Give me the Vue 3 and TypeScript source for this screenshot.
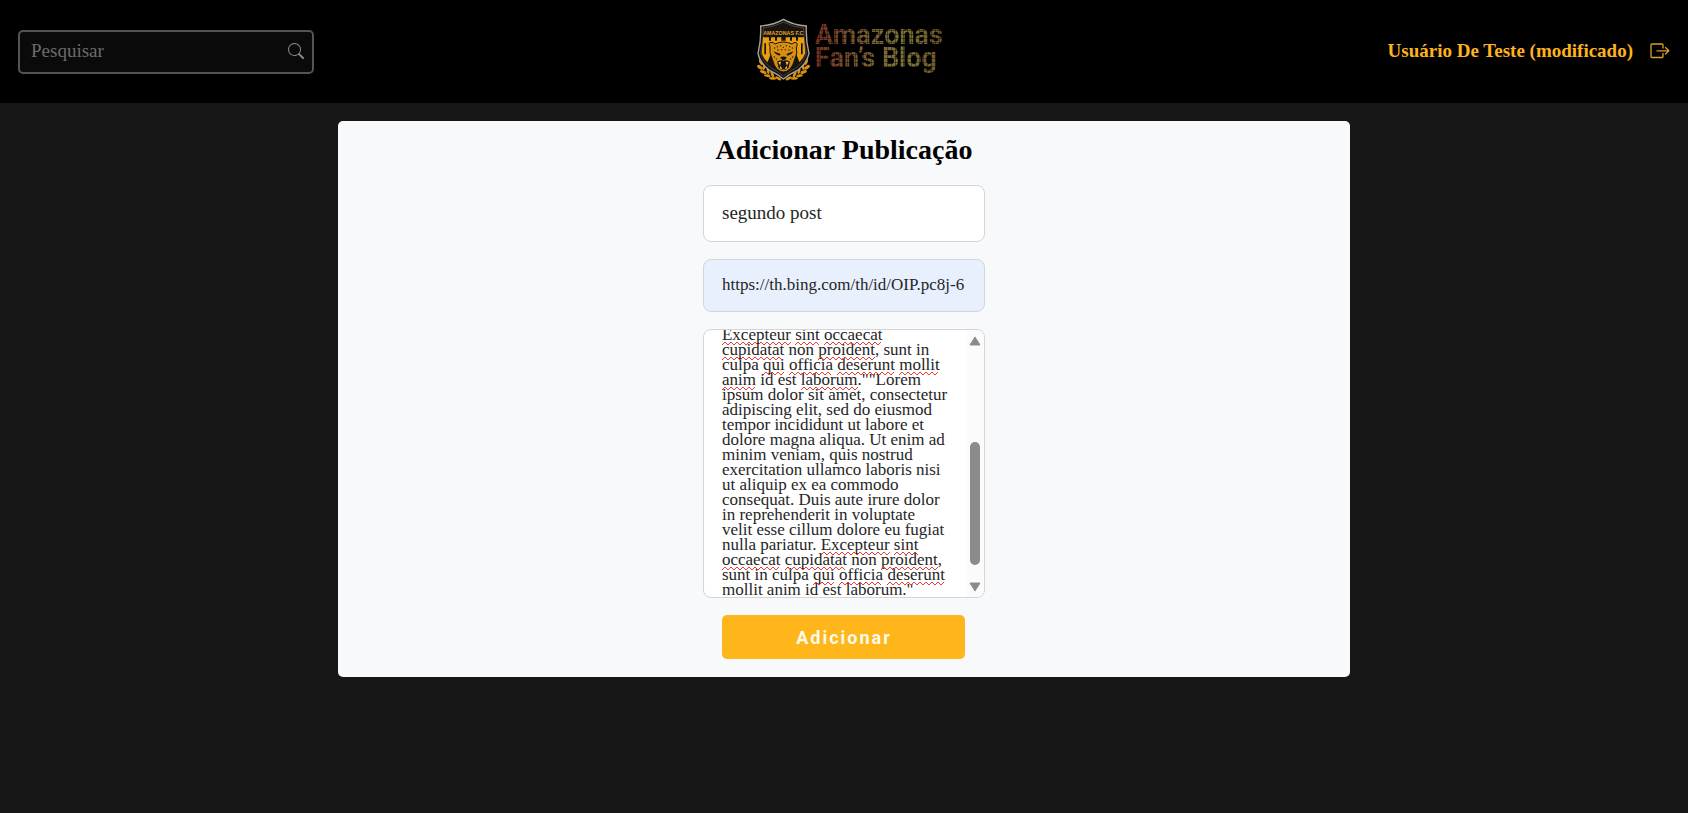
<script setup lang="ts">
import { computed, onMounted, ref } from 'vue'

interface Squiggle {
  x: number
  y: number
  width: number
}

const LINE_HEIGHT = 15
const BODY_FONT = '17px "Liberation Serif"'

const search = ref('')
const title = ref('segundo post')
const image = ref('https://th.bing.com/th/id/OIP.pc8j-6')
const body = ref(
  [
    'eu fugiat nulla pariatur.',
    'Excepteur sint occaecat',
    'cupidatat non proident, sunt in',
    'culpa qui officia deserunt mollit',
    'anim id est laborum.""Lorem',
    'ipsum dolor sit amet, consectetur',
    'adipiscing elit, sed do eiusmod',
    'tempor incididunt ut labore et',
    'dolore magna aliqua. Ut enim ad',
    'minim veniam, quis nostrud',
    'exercitation ullamco laboris nisi',
    'ut aliquip ex ea commodo',
    'consequat. Duis aute irure dolor',
    'in reprehenderit in voluptate',
    'velit esse cillum dolore eu fugiat',
    'nulla pariatur. Excepteur sint',
    'occaecat cupidatat non proident,',
    'sunt in culpa qui officia deserunt',
    'mollit anim id est laborum."',
  ].join('\n'),
)

const area = ref<HTMLTextAreaElement | null>(null)
const scrollTop = ref(0)

// [line, words flagged by the spell checker]
const flagged: [number, string[]][] = [
  [0, ['fugiat', 'nulla', 'pariatur']],
  [1, ['Excepteur', 'sint', 'occaecat']],
  [2, ['cupidatat', 'proident']],
  [3, ['qui', 'officia', 'deserunt', 'mollit']],
  [4, ['anim', 'laborum']],
  [15, ['Excepteur', 'sint']],
  [16, ['occaecat', 'cupidatat', 'proident']],
  [17, ['qui', 'officia', 'deserunt']],
  [18, ['mollit', 'anim', 'laborum']],
]

const context = document.createElement('canvas').getContext('2d')

function measure(text: string): number {
  if (!context) return 0
  context.font = BODY_FONT
  return context.measureText(text).width
}

const squiggles = computed<Squiggle[]>(() => {
  const lines = body.value.split('\n')
  const result: Squiggle[] = []
  for (const [index, words] of flagged) {
    const line = lines[index] ?? ''
    for (const word of words) {
      const start = line.indexOf(word)
      if (start < 0) continue
      result.push({
        x: Math.round(measure(line.slice(0, start))),
        y: index * LINE_HEIGHT + 14,
        width: Math.round(measure(word)),
      })
    }
  }
  return result
})

function wave(s: Squiggle): string {
  let d = `M${s.x} ${s.y + 4}`
  for (let i = 1; i * 3 <= s.width; i++) d += `L${s.x + i * 3} ${s.y + (i % 2 ? 1 : 4)}`
  return d
}

function syncScroll() {
  scrollTop.value = area.value?.scrollTop ?? 0
}

onMounted(() => {
  if (area.value) area.value.scrollTop = LINE_HEIGHT + 3
  syncScroll()
})
</script>

<template>
  <div class="page">
    <header class="header">
      <form class="search" role="search" @submit.prevent>
        <input v-model="search" type="search" placeholder="Pesquisar" aria-label="Pesquisar" />
        <button type="submit" aria-label="Buscar">
          <svg viewBox="0 0 16 16" width="16" height="16" fill="currentColor" aria-hidden="true">
            <path d="M11.742 10.344a6.5 6.5 0 1 0-1.397 1.398h-.001q.044.06.098.115l3.85 3.85a1 1 0 0 0 1.415-1.414l-3.85-3.85a1 1 0 0 0-.115-.1zM12 6.5a5.5 5.5 0 1 1-11 0 5.5 5.5 0 0 1 11 0" />
          </svg>
        </button>
      </form>

      <a class="logo" href="#">
        <svg class="crest" viewBox="20 15 171 201" width="57" height="67" aria-hidden="true">
          <g fill="#d6920f">
            <g id="laurel">
              <ellipse cx="38" cy="153" rx="5" ry="10" transform="rotate(-25 38 153)" />
              <ellipse cx="35" cy="169" rx="5" ry="10" transform="rotate(-55 35 169)" />
              <ellipse cx="47" cy="167" rx="4" ry="10" transform="rotate(5 47 167)" />
              <ellipse cx="45" cy="183" rx="5" ry="10" transform="rotate(-70 45 183)" />
              <ellipse cx="59" cy="179" rx="4" ry="10" transform="rotate(-10 59 179)" />
              <ellipse cx="57" cy="194" rx="4" ry="10" transform="rotate(-80 57 194)" />
              <ellipse cx="72" cy="190" rx="4" ry="10" transform="rotate(-25 72 190)" />
              <ellipse cx="73" cy="202" rx="4" ry="11" transform="rotate(-88 73 202)" />
              <ellipse cx="90" cy="202" rx="4" ry="10" transform="rotate(-60 90 202)" />
            </g>
            <use href="#laurel" transform="matrix(-1 0 0 1 211 0)" />
          </g>
          <path d="M105.500 25Q76 42 37 45Q39 84 29 128Q36 158 65 179Q87 189 105.500 204Q124 189 146 179Q175 158 182 128Q172 84 174 45Q135 42 105.500 25Z" fill="#17130f" stroke="#aaa79e" stroke-width="4" />
          <path d="M105.500 33Q77 48 45 51Q46 88 37 127Q44 154 70 172Q89 181 105.500 195Q122 181 141 172Q167 154 174 127Q165 88 166 51Q134 48 105.500 33Z" fill="none" stroke="#5d5a53" stroke-width="2" />
          <text x="105" y="71" text-anchor="middle" class="crest-name">AMAZONAS F.C</text>
          <g fill="#e99f0c">
            <path d="M44 79H62V89H68V79H80V89H86V79H99V89H112V79H125V89H131V79H143V89H149V79H167L171 127Q165 143 153 154L145 136V99H139V120H132V99H79V120H72V99H66V136L58 154Q46 143 40 127Z" />
          </g>
          <path d="M48 97H53V130H48ZM158 97H163V130H158ZM65 96H70V145H65ZM141 96H146V145H141Z" fill="#17130f" />
          <path d="M58 154L67 130H144L153 154Q142 168 105 190Q70 168 58 154Z" fill="#17130f" />
          <path d="M65 106Q59 94 68 94Q76 94 80 99Q105 87 131 99Q136 93 144 95Q150 97 144 110Q149 126 140 142Q134 165 125 174Q105 192 86 174Q77 165 71 142Q62 126 65 106Z" fill="#d88e10" stroke="#17130f" stroke-width="3" />
          <g fill="#17130f">
            <path d="M75 121L97 129L93 134Q82 132 75 121ZM136 121L114 129L118 134Q129 132 136 121Z" />
            <path d="M95 139Q105 134 116 139L109 147H102Z" />
            <path d="M86 152Q96 146 105 149Q114 146 125 152L120 171Q105 185 91 171Z" />
            <circle cx="79" cy="111" r="2" /><circle cx="87" cy="107" r="2" /><circle cx="97" cy="104" r="2" />
            <circle cx="114" cy="104" r="2" /><circle cx="124" cy="107" r="2" /><circle cx="132" cy="111" r="2" />
            <circle cx="89" cy="117" r="2" /><circle cx="100" cy="116" r="2" /><circle cx="111" cy="116" r="2" />
            <circle cx="122" cy="117" r="2" /><circle cx="78" cy="138" r="2" /><circle cx="133" cy="138" r="2" />
            <circle cx="84" cy="144" r="2" /><circle cx="127" cy="144" r="2" /><circle cx="105" cy="109" r="2" />
          </g>
          <path d="M90 153L95 164L98 152ZM112 152L116 164L121 153ZM94 172L97 164L101 174H110L114 164L117 172Q105 179 94 172Z" fill="#f3c157" />
        </svg>
        <span class="wordmark">Amazonas<br />Fan’s Blog</span>
      </a>

      <div class="account">
        <a class="user" href="#">Usuário De Teste (modificado)</a>
        <button class="logout" type="button" aria-label="Sair">
          <svg viewBox="0 0 20 16" width="20" height="16" fill="none" stroke="currentColor" aria-hidden="true">
            <path d="M13 5V2Q13 1 12 1H2Q1 1 1 2V13.500Q1 14.500 2 14.500H12Q13 14.500 13 13.500V10.500M7 7.800H18.500M15.500 4.500L18.800 7.800L15.500 11" stroke-width="1.300" stroke-linecap="round" stroke-linejoin="round" />
          </svg>
        </button>
      </div>
    </header>

    <main class="card">
      <h1>Adicionar Publicação</h1>
      <form class="form" @submit.prevent>
        <input v-model="title" class="field title" type="text" aria-label="Título" />
        <input v-model="image" class="field image" type="text" aria-label="Imagem" />
        <div class="editor">
          <textarea ref="area" v-model="body" wrap="off" spellcheck="false" aria-label="Texto" @scroll="syncScroll"></textarea>
          <svg class="squiggles" aria-hidden="true">
            <g :transform="`translate(0 ${-scrollTop})`">
              <path v-for="(s, i) in squiggles" :key="i" :d="wave(s)" />
            </g>
          </svg>
          <div class="scrollbar" aria-hidden="true">
            <svg viewBox="0 0 12 10" width="12" height="10"><path d="M6 1L11 9H1Z" stroke-width="1" stroke-linejoin="round" /></svg>
            <div class="track"><div class="thumb"></div></div>
            <svg viewBox="0 0 12 10" width="12" height="10"><path d="M6 9L1 1H11Z" stroke-width="1" stroke-linejoin="round" /></svg>
          </div>
        </div>
        <button class="submit" type="submit">Adicionar</button>
      </form>
    </main>
  </div>
</template>

<style>
body {
  margin: 0;
  background: #171717;
}
</style>

<style scoped>
.page {
  min-height: 100vh;
  background: #171717;
  font-family: "Liberation Serif", serif;
}

.page *,
.page *::before {
  box-sizing: border-box;
}

.header {
  display: grid;
  grid-template-columns: 1fr auto 1fr;
  align-items: center;
  height: 103px;
  padding: 0 18px;
  background: #000;
}

.search {
  display: flex;
  align-items: center;
  width: 296px;
  height: 44px;
  padding: 0 8px 2px 11px;
  border: 2px solid #545454;
  border-radius: 5px;
  background: #0a0a0a;
}

.search input {
  flex: 1;
  min-width: 0;
  padding: 0;
  border: 0;
  outline: 0;
  background: transparent;
  color: #767676;
  font: 19px "Liberation Serif", serif;
}

.search input::placeholder {
  color: #6c6c6c;
}

.search button,
.logout {
  display: flex;
  padding: 0;
  border: 0;
  background: none;
  color: #8a8a8a;
}

.logo {
  display: flex;
  align-items: center;
  gap: 3px;
  padding: 0 0 4px 10px;
  text-decoration: none;
}

.crest-name {
  fill: #e3a32a;
  font: bold 16px "Liberation Sans", sans-serif;
}

.wordmark {
  position: relative;
  padding-bottom: 5px;
  background: linear-gradient(90deg, #74301f, #7a5c30 35%, #7d7436 70%, #6e5527);
  background-clip: text;
  color: transparent;
  font: 700 27px/23px Roboto, sans-serif;
}

.wordmark::before {
  content: "";
  position: absolute;
  inset: 0;
  background:
    repeating-linear-gradient(0deg, rgba(0, 0, 0, 0.4) 0 1px, transparent 1px 4px),
    repeating-linear-gradient(90deg, rgba(0, 0, 0, 0.4) 0 1px, transparent 1px 4px);
}

.account {
  display: flex;
  justify-content: flex-end;
  align-items: center;
  gap: 17px;
  padding-bottom: 2px;
}

.user {
  color: #fdb31b;
  font-size: 19px;
  font-weight: 700;
  text-decoration: none;
}

.logout {
  color: #e0a024;
}

.card {
  display: flex;
  flex-direction: column;
  align-items: center;
  width: 60%;
  margin: 18px auto 0;
  padding: 12px 18px 18px;
  border-radius: 5px;
  background: #f8f9fb;
}

h1 {
  margin: 0;
  color: #000;
  font-size: 28px;
  font-weight: 700;
  line-height: 34px;
}

.form {
  display: flex;
  flex-direction: column;
  align-items: center;
  gap: 17px;
  width: 282px;
  margin-top: 18px;
}

.field {
  width: 100%;
  padding: 0 18px 2px;
  border: 1px solid #d3d5d9;
  border-radius: 8px;
  outline: 0;
  background: #fff;
  color: #262626;
  font-family: "Liberation Serif", serif;
}

.title {
  height: 57px;
  font-size: 19px;
}

.image {
  height: 53px;
  background: #e8f0fe;
  font-size: 17px;
}

.editor {
  position: relative;
  display: flex;
  width: 100%;
  height: 269px;
  overflow: hidden;
  border: 1px solid #d3d5d9;
  border-radius: 8px;
  background: #fff;
}

textarea {
  flex: 1;
  min-width: 0;
  padding: 0 0 0 18px;
  border: 0;
  outline: 0;
  overflow: auto;
  resize: none;
  scrollbar-width: none;
  background: transparent;
  color: #262626;
  font: 17px/15px "Liberation Serif", serif;
}

.squiggles {
  position: absolute;
  top: 0;
  left: 18px;
  width: 240px;
  height: 100%;
  pointer-events: none;
  fill: none;
  stroke: #ee3b36;
}

.scrollbar {
  display: flex;
  flex-direction: column;
  align-items: center;
  gap: 4px;
  width: 17px;
  padding: 6px 0 5px;
  background: #fbfbfb;
  fill: #8b8b8b;
  stroke: #8b8b8b;
}

.track {
  display: flex;
  flex: 1;
  flex-direction: column;
  justify-content: flex-end;
  padding-bottom: 13px;
}

.thumb {
  width: 10px;
  height: 57%;
  border-radius: 5px;
  background: #8b8b8b;
}

.submit {
  width: 243px;
  height: 44px;
  padding: 0;
  border: 0;
  border-radius: 5px;
  background: #ffb61b;
  color: #fffbea;
  font: 700 18px Roboto, sans-serif;
  letter-spacing: 2px;
}
</style>
